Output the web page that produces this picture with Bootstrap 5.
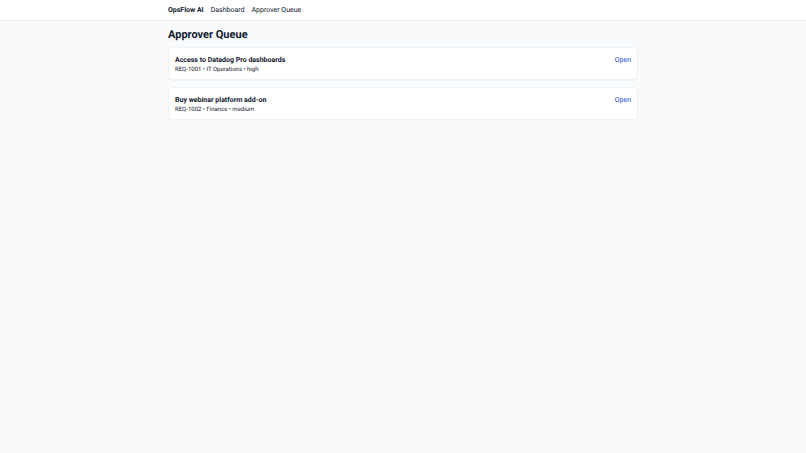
<!DOCTYPE html>
<html lang="en">
<head>
<meta charset="utf-8">
<meta name="viewport" content="width=device-width, initial-scale=1">
<title>OpsFlow AI</title>
<link href="https://cdn.jsdelivr.net/npm/bootstrap@5.3.0/dist/css/bootstrap.min.css" rel="stylesheet">
<style>
body { font-family: Roboto, "Liberation Sans", sans-serif; font-size: 7px; line-height: 12px; background: #f8fafc; color: #0f172a; text-rendering: geometricPrecision; }
.page-column { max-width: 484px; padding: 0 7px; }
.top-bar { border-color: #edf0f4 !important; }
.top-links { gap: 7px; padding-top: 4px; padding-bottom: 4px; }
.page-title { font-size: 11px; line-height: 14px; margin: 7px 0 5px; }
.request-list { gap: 7px; }
.request-card { padding: 6px; border-color: #f0f3f6; border-radius: 5px; color: inherit; box-shadow: 0 1px 1px rgba(15, 23, 42, .03); }
.request-title { font-size: 7px; line-height: 12px; }
.request-meta { font-size: 6px; line-height: 7px; }
.open-link { color: #1d4ed8; }
</style>
</head>
<body>
<header class="top-bar bg-white border-bottom">
  <nav class="page-column top-links container-fluid d-flex align-items-center">
    <a class="fw-bold text-reset text-decoration-none" href="#">OpsFlow AI</a>
    <a class="text-reset text-decoration-none" href="#">Dashboard</a>
    <a class="text-reset text-decoration-none" href="#">Approver Queue</a>
  </nav>
</header>
<main class="page-column container-fluid">
  <h1 class="page-title fw-bold">Approver Queue</h1>
  <div class="request-list d-flex flex-column">
    <article class="request-card card flex-row justify-content-between align-items-start">
      <div><h2 class="request-title fw-bold mb-0">Access to Datadog Pro dashboards</h2><p class="request-meta mb-0">REQ-1001 • IT Operations • high</p></div>
      <a class="open-link text-decoration-none" href="#">Open</a>
    </article>
    <article class="request-card card flex-row justify-content-between align-items-start">
      <div><h2 class="request-title fw-bold mb-0">Buy webinar platform add-on</h2><p class="request-meta mb-0">REQ-1002 • Finance • medium</p></div>
      <a class="open-link text-decoration-none" href="#">Open</a>
    </article>
  </div>
</main>
<script src="https://cdn.jsdelivr.net/npm/bootstrap@5.3.0/dist/js/bootstrap.bundle.min.js"></script>
</body>
</html>
